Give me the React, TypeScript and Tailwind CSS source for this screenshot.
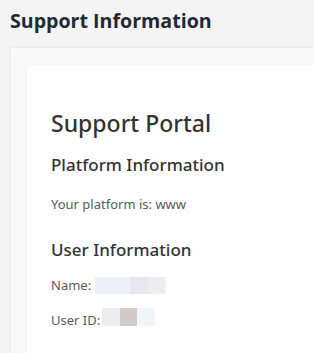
import React from "react";

const Redacted = ({ blocks, className }: { blocks: { w: string; c: string }[]; className: string }) => (
  <span className={`inline-flex ${className}`}>
    {blocks.map((b, i) => (
      <span key={i} className={`${b.w} ${b.c} h-full`} />
    ))}
  </span>
);

const App = () => {
  return (
    <div className="h-screen w-full bg-[#f4f4f4] font-['Open_Sans',sans-serif] overflow-hidden">
      <h1 className="pl-[10px] pt-[7px] text-[19.6px] font-bold text-[#1f2937] leading-[28px]">
        Support Information
      </h1>

      <div className="ml-[11px] mt-[13px] bg-[#f9f9f9] shadow-[0_0_3px_rgba(0,0,0,0.08)] pl-[16px] pt-[17px] pb-4">
        <div className="bg-white rounded-tl-[8px] shadow-[0_1px_3px_rgba(0,0,0,0.06)] pl-[24px] pt-[42px] pb-6 min-h-[300px] font-['Noto_Sans',sans-serif]">
          <h2 className="text-[23px] leading-[32px] font-medium text-[#333]">
            Support Portal
          </h2>

          <h3 className="mt-[14px] text-[17px] leading-[24px] font-medium text-[#333]">
            Platform Information
          </h3>
          <p className="mt-[18px] text-[13px] leading-[18px] text-[#5a5a5a]">
            Your platform is: www
          </p>

          <h3 className="mt-[25px] text-[17px] leading-[24px] font-medium text-[#333]">
            User Information
          </h3>
          <div className="mt-[14px] flex items-start gap-[4px] text-[13px] leading-[18px] text-[#5a5a5a]">
            <span>Name:</span>
            <Redacted
              className="h-[17px] mt-[1px]"
              blocks={[
                { w: "w-[35px]", c: "bg-[#eef0f6]" },
                { w: "w-[18px]", c: "bg-[#e8e6ee]" },
                { w: "w-[18px]", c: "bg-[#efecf0]" },
              ]}
            />
          </div>
          <div className="mt-[17px] flex items-start gap-[2px] text-[13px] leading-[18px] text-[#5a5a5a]">
            <span>User ID:</span>
            <Redacted
              className="h-[18px] -mt-[3px]"
              blocks={[
                { w: "w-[18px]", c: "bg-[#ededf0]" },
                { w: "w-[17px]", c: "bg-[#d5c9c9]" },
                { w: "w-[18px]", c: "bg-[#f2f5f8]" },
              ]}
            />
          </div>
        </div>
      </div>
    </div>
  );
};

export default App;
